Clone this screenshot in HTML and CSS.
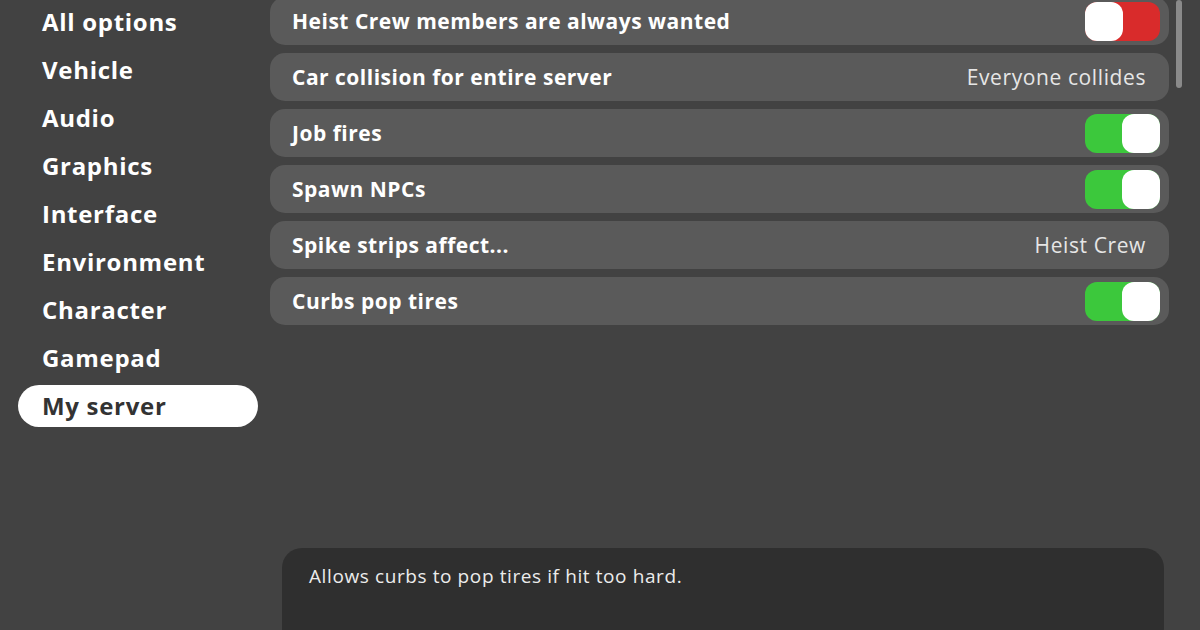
FILE: index.html
```html
<!DOCTYPE html>
<html>

<head lang="en">
    <meta charset="UTF-8">
    <title>Settings</title>
    <link rel="stylesheet" href="styles.css">
</head>

<body>
    <div class="page">
        <ul class="menu">
            <li class="menu-item">All options</li>
            <li class="menu-item">Vehicle</li>
            <li class="menu-item">Audio</li>
            <li class="menu-item">Graphics</li>
            <li class="menu-item">Interface</li>
            <li class="menu-item">Environment</li>
            <li class="menu-item">Character</li>
            <li class="menu-item">Gamepad</li>
            <li class="menu-item active">My server</li>
        </ul>

        <div class="main">
            <div class="option-list">
                <div class="option">
                    <span class="option-name">Heist Crew members are always wanted</span>
                    <span class="toggle off"><span class="knob"></span></span>
                </div>
                <div class="option">
                    <span class="option-name">Car collision for entire server</span>
                    <span class="option-value">Everyone collides</span>
                </div>
                <div class="option">
                    <span class="option-name">Job fires</span>
                    <span class="toggle on"><span class="knob"></span></span>
                </div>
                <div class="option">
                    <span class="option-name">Spawn NPCs</span>
                    <span class="toggle on"><span class="knob"></span></span>
                </div>
                <div class="option">
                    <span class="option-name">Spike strips affect...</span>
                    <span class="option-value">Heist Crew</span>
                </div>
                <div class="option">
                    <span class="option-name">Curbs pop tires</span>
                    <span class="toggle on"><span class="knob"></span></span>
                </div>
            </div>

            <div class="description">Allows curbs to pop tires if hit too hard.</div>
        </div>

        <div class="scroll-track">
            <div class="scroll-thumb"></div>
        </div>
    </div>
</body>

</html>
```

FILE: styles.css
```css
html,
body,
ul,
li,
div,
span {
    margin: 0;
    padding: 0;
}

body {
    background: #424242;
    color: #ffffff;
    font-family: "Open Sans", "Liberation Sans", sans-serif;
    height: 630px;
    overflow: hidden;
}

.page {
    display: flex;
    height: 630px;
}

/* left menu */
.menu {
    list-style: none;
    width: 252px;
    padding-left: 18px;
    padding-top: 1px;
    display: flex;
    flex-direction: column;
    gap: 6px;
}

.menu-item {
    width: 240px;
    height: 42px;
    line-height: 42px;
    padding-left: 24px;
    box-sizing: border-box;
    font-size: 24px;
    font-weight: 700;
    letter-spacing: 0.7px;
    border-radius: 21px;
}

.menu-item.active {
    background: #ffffff;
    color: #333333;
}

/* options */
.main {
    width: 899px;
    display: flex;
    flex-direction: column;
}

.option-list {
    margin-top: -3px;
    display: flex;
    flex-direction: column;
    gap: 8px;
}

.option {
    height: 48px;
    background: #5a5a5a;
    border-radius: 15px;
    display: flex;
    align-items: center;
    justify-content: space-between;
    padding: 0 9px 0 22px;
}

.option-name {
    font-size: 21px;
    font-weight: 700;
    letter-spacing: 0.5px;
}

.option-value {
    font-size: 21px;
    letter-spacing: 0.6px;
    color: #e6e6e6;
    padding-right: 14px;
}

.toggle {
    width: 75px;
    height: 39px;
    border-radius: 12px;
    display: flex;
}

.toggle.on {
    background: #3cc83c;
    justify-content: flex-end;
}

.toggle.off {
    background: #d92b2b;
}

.knob {
    width: 38px;
    height: 39px;
    border-radius: 12px;
    background: #ffffff;
}

.description {
    margin: auto 5px 0 12px;
    height: 100px;
    flex-shrink: 0;
    transform: translateY(18px);
    background: #2f2f2f;
    border-radius: 20px;
    padding: 15px 27px;
    box-sizing: border-box;
    font-size: 19px;
    letter-spacing: 0.6px;
    color: #ececec;
}

/* scrollbar */
.scroll-track {
    margin-left: 7px;
    width: 6px;
}

.scroll-thumb {
    height: 88px;
    background: #8a8a8a;
    border-radius: 3px;
}
```
